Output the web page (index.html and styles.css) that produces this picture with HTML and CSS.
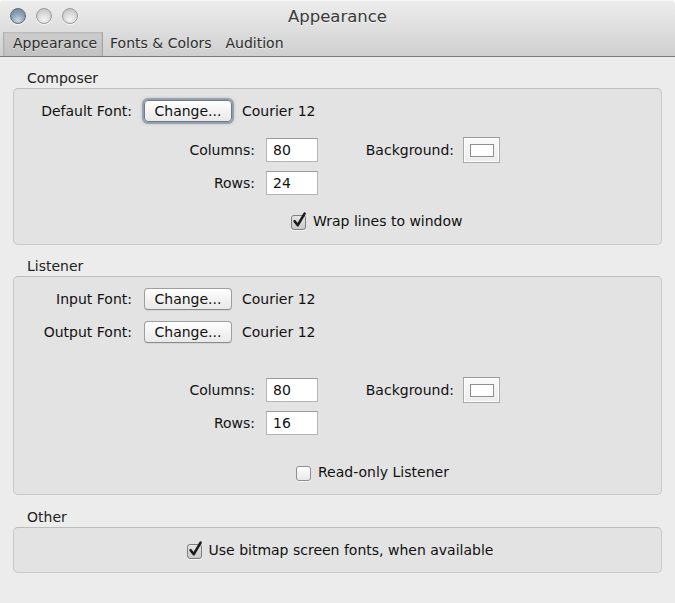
FILE: index.html
```html
<!DOCTYPE html>
<html>
<head>
<meta charset="utf-8">
<title>Appearance</title>
<link rel="stylesheet" href="styles.css">
</head>
<body>
<div class="window">
  <header class="titlebar">
    <div class="title-row">
      <div class="lights">
        <span class="light graphite"></span>
        <span class="light"></span>
        <span class="light"></span>
      </div>
      <div class="title">Appearance</div>
      <div class="spacer"></div>
    </div>
    <nav class="tabs">
      <span class="tab tab-first selected">Appearance</span>
      <span class="tab">Fonts &amp; Colors</span>
      <span class="tab">Audition</span>
    </nav>
  </header>

  <main class="content">
    <div class="group-label">Composer</div>
    <section class="box box-composer">
      <div class="row font-row">
        <span class="lbl lbl-font">Default Font:</span>
        <span class="btn btn-default">Change...</span>
        <span class="font-name">Courier 12</span>
      </div>
      <div class="row field-row first-field">
        <span class="lbl lbl-field">Columns:</span>
        <span class="input">80</span>
        <span class="lbl lbl-bg">Background:</span>
        <span class="well"><span class="well-inner"></span></span>
      </div>
      <div class="row field-row">
        <span class="lbl lbl-field">Rows:</span>
        <span class="input">24</span>
      </div>
      <div class="row check-row check-wrap">
        <span class="checkbox checked">
          <svg viewBox="0 0 16 16" width="16" height="16"><path d="M3.6 8.2 L6.8 12.2 L13.6 0.6" /></svg>
        </span>
        <span class="check-label">Wrap lines to window</span>
      </div>
    </section>

    <div class="group-label">Listener</div>
    <section class="box box-listener">
      <div class="row font-row">
        <span class="lbl lbl-font">Input Font:</span>
        <span class="btn">Change...</span>
        <span class="font-name">Courier 12</span>
      </div>
      <div class="row font-row second-font">
        <span class="lbl lbl-font">Output Font:</span>
        <span class="btn">Change...</span>
        <span class="font-name">Courier 12</span>
      </div>
      <div class="row field-row first-field-listener">
        <span class="lbl lbl-field">Columns:</span>
        <span class="input">80</span>
        <span class="lbl lbl-bg">Background:</span>
        <span class="well"><span class="well-inner"></span></span>
      </div>
      <div class="row field-row">
        <span class="lbl lbl-field">Rows:</span>
        <span class="input">16</span>
      </div>
      <div class="row check-row check-readonly">
        <span class="checkbox"></span>
        <span class="check-label">Read-only Listener</span>
      </div>
    </section>

    <div class="group-label group-label-other">Other</div>
    <section class="box box-other">
      <div class="row check-row check-center">
        <span class="checkbox checked">
          <svg viewBox="0 0 16 16" width="16" height="16"><path d="M3.6 8.2 L6.8 12.2 L13.6 0.6" /></svg>
        </span>
        <span class="check-label">Use bitmap screen fonts, when available</span>
      </div>
    </section>
  </main>
</div>
</body>
</html>
```

FILE: styles.css
```css
* { box-sizing: border-box; }

html, body {
  margin: 0;
  padding: 0;
  background: #ffffff;
}

body {
  font-family: "DejaVu Sans", "Liberation Sans", sans-serif;
  font-size: 14px;
  color: #111;
}

.window {
  width: 675px;
  height: 603px;
  background: #ececec;
  border-radius: 5px 5px 0 0;
  overflow: hidden;
}

/* ---------- title bar ---------- */
.titlebar {
  height: 57px;
  background: linear-gradient(#ededed, #e2e2e2 40%, #cfcfcf);
  border-bottom: 1px solid #7d7d7d;
  box-shadow: inset 0 1px 0 #f8f8f8;
}

.title-row {
  height: 31px;
  display: grid;
  grid-template-columns: 1fr auto 1fr;
  align-items: center;
}

.lights {
  display: flex;
  gap: 10px;
  padding-left: 10px;
  padding-top: 1px;
}

.light {
  width: 16px;
  height: 16px;
  border-radius: 50%;
  background: radial-gradient(circle at 50% 75%, #f4f4f4 0%, #dcdcdc 45%, #bdbdbd 100%);
  border: 1px solid #9a9a9a;
  box-shadow: 0 1px 0 rgba(255,255,255,0.7);
}

.light.graphite {
  background: radial-gradient(circle at 50% 80%, #c9d6e3 0%, #8ea2b6 50%, #6d8197 100%);
  border-color: #5d6d7e;
}

.title {
  font-size: 16.5px;
  color: #3a3a3a;
  padding-top: 2px;
  text-shadow: 0 1px 0 rgba(255,255,255,0.6);
}

.tabs {
  height: 25px;
  display: flex;
  align-items: stretch;
  padding-left: 3px;
}

.tab {
  display: flex;
  align-items: center;
  padding: 0 7px 2px;
  color: #2e2e2e;
  text-shadow: 0 1px 0 rgba(255,255,255,0.5);
}

.tab-first {
  padding-left: 9px;
  padding-right: 5px;
  margin-top: 1px;
}

.tab.selected {
  background: linear-gradient(#cdcdcd, #c2c2c2);
  border-left: 1px solid #b0b0b0;
  border-right: 1px solid #a4a4a4;
  box-shadow: inset 0 1px 2px rgba(0,0,0,0.12);
}

/* ---------- content ---------- */
.content {
  padding: 0 13px;
}

.group-label {
  height: 16px;
  line-height: 16px;
  margin: 13px 0 2px 14px;
  color: #222;
}

.group-label-other {
  margin-top: 14px;
}

.box {
  background: #e3e3e3;
  border: 1px solid #c9c9c9;
  border-top-color: #bdbdbd;
  border-radius: 5px;
}

.box-composer {
  height: 157px;
  padding-top: 11px;
}

.box-listener {
  height: 219px;
  padding-top: 11px;
}

.box-other {
  height: 46px;
  padding-top: 12px;
}

.row {
  display: flex;
  align-items: center;
}

.font-row {
  height: 22px;
}

.second-font {
  margin-top: 11px;
}

.field-row {
  height: 26px;
  margin-top: 7px;
}

.first-field {
  margin-top: 15px;
}

.first-field-listener {
  margin-top: 34px;
}

.lbl {
  text-align: right;
  white-space: nowrap;
}

.lbl-font {
  width: 118px;
  margin-right: 12px;
}

.lbl-field {
  width: 241px;
  margin-right: 11px;
}

.lbl-bg {
  width: 136px;
  margin-right: 9px;
}

.btn {
  width: 88px;
  height: 22px;
  display: flex;
  align-items: center;
  justify-content: center;
  background: linear-gradient(#ffffff, #f3f3f3 50%, #e9e9e9);
  border: 1px solid #9e9e9e;
  border-bottom-color: #8a8a8a;
  border-radius: 4px;
  box-shadow: 0 1px 0 rgba(0,0,0,0.06);
  margin-right: 10px;
  padding-bottom: 1px;
}

.btn-default {
  border-color: #6f7a86;
  box-shadow: 0 0 0 2px rgba(111,128,148,0.55), 0 0 3px 2px rgba(111,128,148,0.35);
}

.input {
  width: 52px;
  height: 24px;
  background: #fff;
  border: 1px solid #b4b4b4;
  border-top-color: #9a9a9a;
  padding-left: 6px;
  line-height: 22px;
}

.well {
  width: 37px;
  height: 26px;
  display: flex;
  align-items: center;
  justify-content: center;
  background: linear-gradient(#fafafa, #ececec);
  border: 1px solid #a9a9a9;
  border-top-color: #9b9b9b;
  box-shadow: inset 0 0 0 1px #fff;
}

.well-inner {
  width: 24px;
  height: 13px;
  background: #fff;
  border: 1px solid #8e8e8e;
}

.check-row {
  height: 20px;
}

.check-wrap {
  margin-top: 15px;
  padding-left: 277px;
}

.check-readonly {
  margin-top: 26px;
  padding-left: 282px;
}

.check-center {
  justify-content: center;
  padding-left: 5px;
}

.checkbox {
  position: relative;
  width: 15px;
  height: 15px;
  margin-top: 2px;
  border: 1px solid #8f8f8f;
  border-radius: 3px;
  background: linear-gradient(#fefefe, #e8e8e8);
  box-shadow: 0 1px 0 rgba(255,255,255,0.6);
  margin-right: 7px;
  flex: none;
}

.checkbox.checked {
  background: linear-gradient(#e6e6e6, #c8c8c8);
  border-color: #7e7e7e;
}

.checkbox svg {
  position: absolute;
  left: -1px;
  top: -3px;
  overflow: visible;
}

.checkbox svg path {
  fill: none;
  stroke: #1c1c1c;
  stroke-width: 2.6;
  stroke-linecap: round;
  stroke-linejoin: round;
}

.check-label {
  white-space: nowrap;
}
```
